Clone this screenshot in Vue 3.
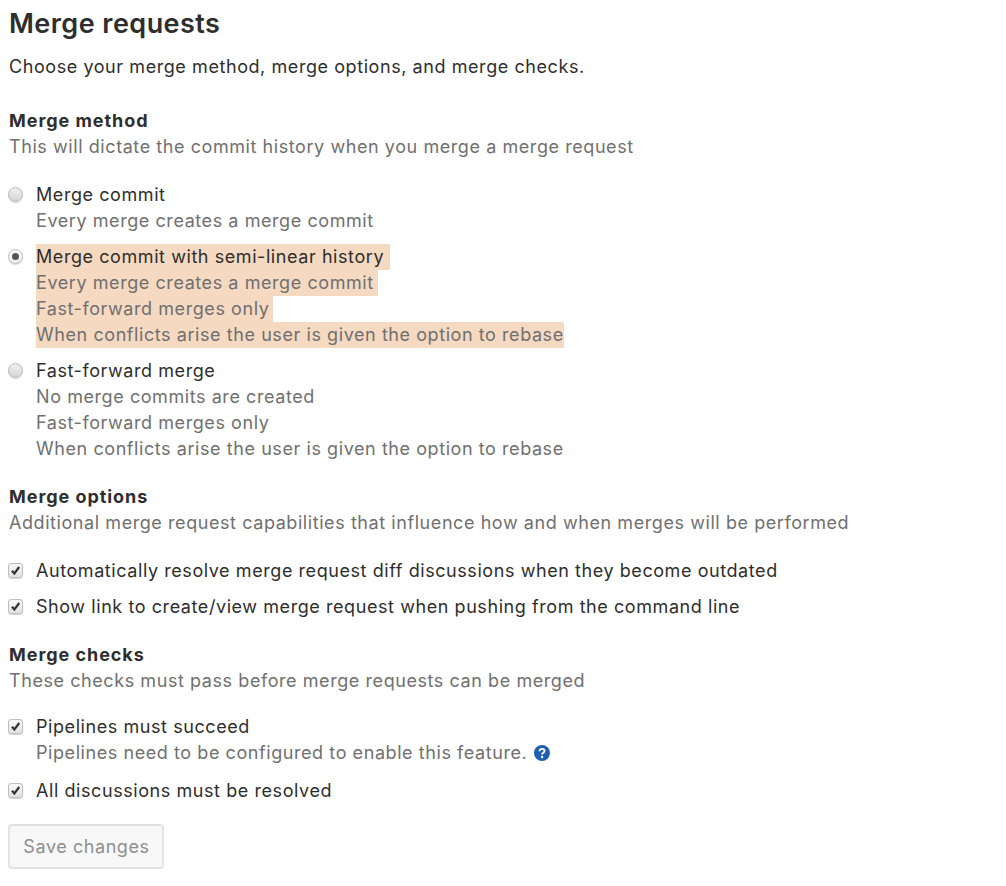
<template>
  <div class="page">
    <h2 class="title">Merge requests</h2>
    <p class="lead">Choose your merge method, merge options, and merge checks.</p>

    <section class="group method">
      <h4>Merge method</h4>
      <p class="help">This will dictate the commit history when you merge a merge request</p>
      <div class="options">
        <label v-for="m in methods" :key="m.name" class="option" :class="{ on: m.on }">
          <span class="radio" :class="{ checked: m.on }"></span>
          <span class="body">
            <span class="line name"><span>{{ m.name }}</span></span>
            <span v-for="h in m.help" :key="h" class="line muted"><span>{{ h }}</span></span>
          </span>
        </label>
      </div>
    </section>

    <section class="group">
      <h4>Merge options</h4>
      <p class="help">Additional merge request capabilities that influence how and when merges will be performed</p>
      <div class="checks first">
        <label v-for="o in mergeOptions" :key="o" class="check">
          <span class="box"><svg viewBox="0 0 13 13"><path d="M3 6.8 5.4 9.5 10.2 3" /></svg></span>
          <span class="line name">{{ o }}</span>
        </label>
      </div>
    </section>

    <section class="group">
      <h4>Merge checks</h4>
      <p class="help">These checks must pass before merge requests can be merged</p>
      <div class="checks last">
        <label class="check">
          <span class="box"><svg viewBox="0 0 13 13"><path d="M3 6.8 5.4 9.5 10.2 3" /></svg></span>
          <span class="body">
            <span class="line name">Pipelines must succeed</span>
            <span class="line muted">Pipelines need to be configured to enable this feature.
              <svg class="qmark" viewBox="0 0 16 16"><circle cx="8" cy="8" r="8" fill="#1f5fae" /><path d="M5.6 6.2c0-1.4 1.1-2.3 2.5-2.3s2.4.9 2.4 2.1c0 1.8-2.4 1.7-2.4 3.4" fill="none" stroke="#fff" stroke-width="1.9" /><circle cx="8.1" cy="12" r="1.2" fill="#fff" /></svg>
            </span>
          </span>
        </label>
        <label class="check">
          <span class="box"><svg viewBox="0 0 13 13"><path d="M3 6.8 5.4 9.5 10.2 3" /></svg></span>
          <span class="line name">All discussions must be resolved</span>
        </label>
      </div>
    </section>

    <button class="save" type="button" disabled>Save changes</button>
  </div>
</template>

<script setup>
const methods = [
  { name: 'Merge commit', help: ['Every merge creates a merge commit'] },
  {
    name: 'Merge commit with semi-linear history',
    on: true,
    help: [
      'Every merge creates a merge commit',
      'Fast-forward merges only',
      'When conflicts arise the user is given the option to rebase'
    ]
  },
  {
    name: 'Fast-forward merge',
    help: [
      'No merge commits are created',
      'Fast-forward merges only',
      'When conflicts arise the user is given the option to rebase'
    ]
  }
]

const mergeOptions = [
  'Automatically resolve merge request diff discussions when they become outdated',
  'Show link to create/view merge request when pushing from the command line'
]
</script>

<style>
html, body { background: #fff; }
</style>

<style scoped>
.page {
  width: 1006px;
  height: 886px;
  box-sizing: border-box;
  padding: 8px 9px 0;
  overflow: hidden;
  font-family: Inter, "Liberation Sans", Arial, sans-serif;
  font-size: 18px;
  line-height: 26px;
  color: #2e2e2e;
  letter-spacing: 0.57px;
}
.title {
  margin: 0;
  font-size: 27px;
  line-height: 32px;
  font-weight: 600;
  letter-spacing: 0.45px;
}
.lead { margin: 14px 0 0; }
.group { margin-top: 22px; }
.group.method { margin-top: 28px; }
.group h4 { margin: 0; font-size: 18px; line-height: 26px; font-weight: 700; letter-spacing: 0.95px; }
.help { margin: 0; color: #707070; }
.options { margin-top: 22px; display: flex; flex-direction: column; gap: 10px; }
.option, .check { display: flex; align-items: flex-start; }
.body { display: flex; flex-direction: column; align-items: flex-start; }
.line { display: block; }
.muted { color: #707070; }
.on .line > span { display: inline-block; background: #f5d9c0; padding-right: 6px; }
.on .muted > span { padding-right: 4px; }
.on .muted:last-child > span { padding-right: 0; }
.radio {
  width: 15px;
  height: 15px;
  margin: 5px 13px 0 -1px;
  box-sizing: border-box;
  border-radius: 50%;
  border: 1px solid #b9b9b9;
  background: linear-gradient(#efefef, #d6d6d6);
  box-shadow: 0 1px 1px rgba(0, 0, 0, 0.15);
  flex: none;
  position: relative;
}
.radio.checked { background: linear-gradient(#fff, #ededed); }
.radio.checked::after {
  content: "";
  position: absolute;
  left: 3px;
  top: 3px;
  width: 7px;
  height: 7px;
  border-radius: 50%;
  background: #555;
}
.checks { margin-top: 22px; display: flex; flex-direction: column; gap: 10px; }
.checks.last { margin-top: 20px; gap: 12px; }
.box {
  width: 15px;
  height: 15px;
  margin: 5px 13px 0 -1px;
  box-sizing: border-box;
  border-radius: 3px;
  border: 1px solid #bdbdbd;
  background: linear-gradient(#f8f8f8, #e2e2e2);
  box-shadow: 0 1px 1px rgba(0, 0, 0, 0.15);
  flex: none;
}
.box svg { display: block; width: 13px; height: 13px; }
.box path { fill: none; stroke: #333; stroke-width: 2.2; }
.qmark { width: 16px; height: 16px; vertical-align: -2px; margin-left: 1px; }
.save {
  display: block;
  margin: 20px 0 0 -1px;
  width: 156px;
  height: 45px;
  padding: 0 0 0 1px;
  font: inherit;
  letter-spacing: inherit;
  color: #8f8f8f;
  background: #f8f8f8;
  border: 2px solid #e2e2e2;
  border-radius: 4px;
}
</style>
